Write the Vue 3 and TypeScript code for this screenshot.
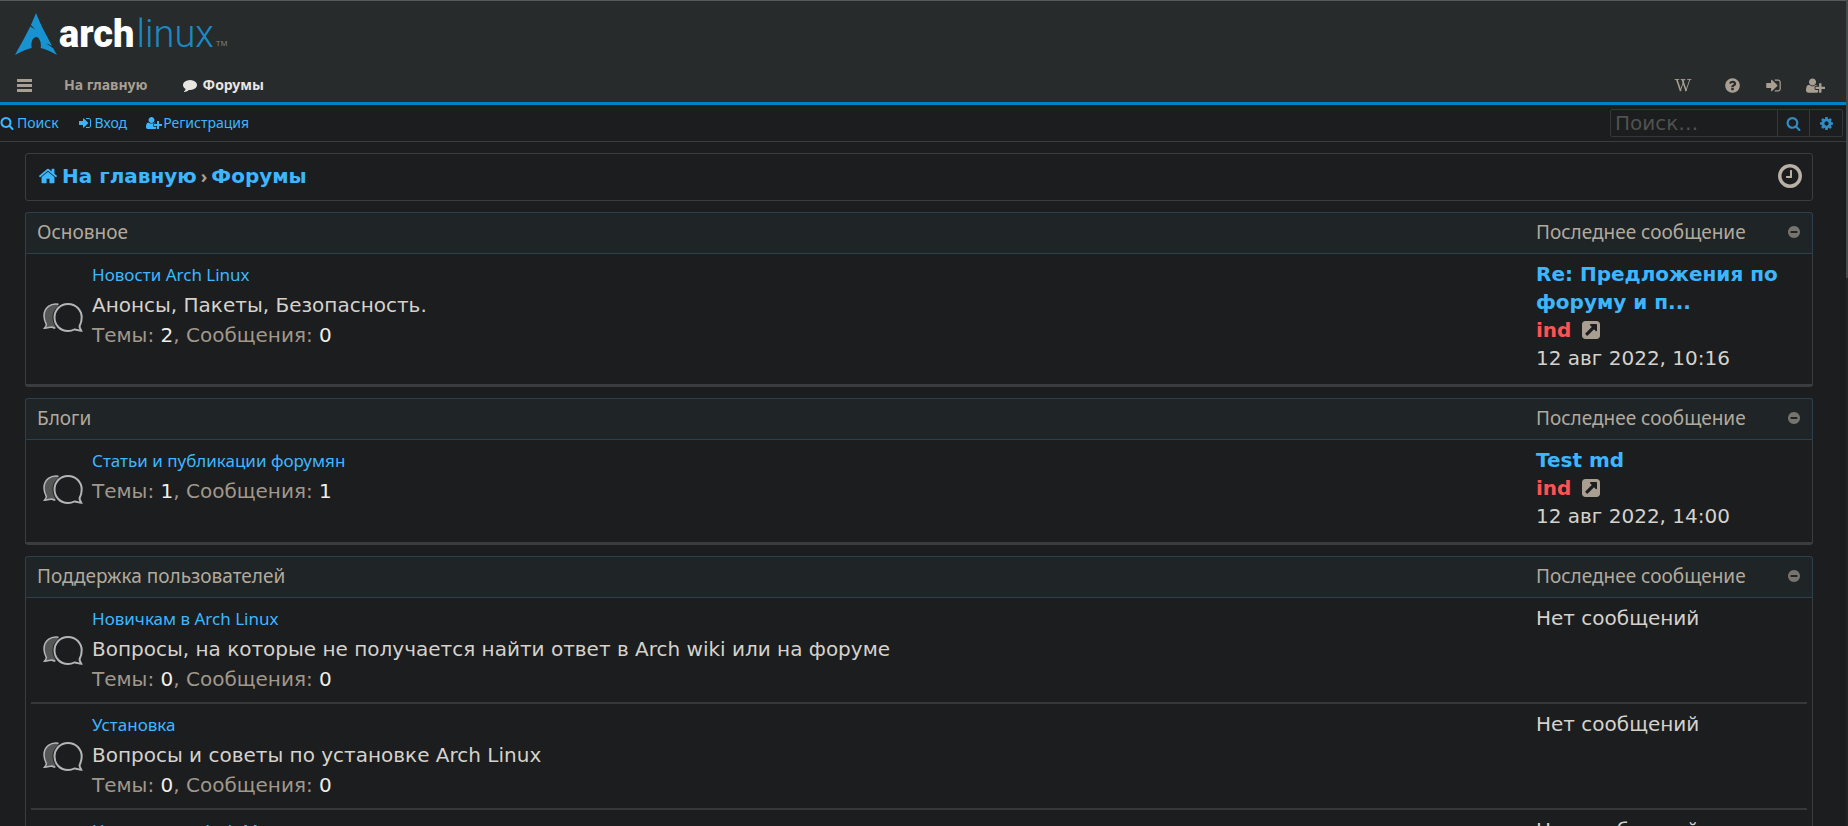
<script setup lang="ts">
interface LastPost {
  title: string
  user: string
  date: string
}
interface Forum {
  name: string
  description?: string
  topics: number
  posts: number
  last?: LastPost
}
interface Category {
  name: string
  forums: Forum[]
}

const circle =
  'M1664 896q0 209-103 385.5t-279.5 279.5-385.5 103-385.5-103-279.5-279.5-103-385.5 103-385.5 279.5-279.5 385.5-103 385.5 103 279.5 279.5 103 385.5z'

const icons = {
  search:
    'M1216 832q0-185-131.5-316.5t-316.5-131.5-316.5 131.5-131.5 316.5 131.5 316.5 316.5 131.5 316.5-131.5 131.5-316.5zm512 832q0 52-38 90t-90 38q-54 0-90-38l-343-342q-179 124-399 124-143 0-273.5-55.5t-225-150-150-225-55.5-273.5 55.5-273.5 150-225 225-150 273.5-55.5 273.5 55.5 225 150 150 225 55.5 273.5q0 220-124 399l343 343q37 37 37 90z',
  signIn:
    'M1312 896q0 26-19 45l-544 544q-19 19-45 19t-45-19-19-45v-288h-448q-26 0-45-19t-19-45v-384q0-26 19-45t45-19h448v-288q0-26 19-45t45-19 45 19l544 544q19 19 19 45zm352-352v704q0 119-84.5 203.5t-203.5 84.5h-320q-13 0-22.5-9.5t-9.5-22.5q0-4-1-20t-.5-26.5 3-23.5 10-19.5 20.5-6.5h320q66 0 113-47t47-113v-704q0-66-47-113t-113-47h-312l-11.5-1-11.5-3-8-5.5-7-9-2-13.5q0-4-1-20t-.5-26.5 3-23.5 10-19.5 20.5-6.5h320q119 0 203.5 84.5t84.5 203.5z',
  comment:
    'M1792 896q0 174-120 321.5t-326 233-450 85.5q-70 0-145-8-198 175-460 242-49 14-114 22-17 2-30.5-9t-17.5-29v-1q-3-4-.5-12t2-10 4.5-9.5l6-9 7-8.5 8-9q7-8 31-34.5t34.5-38 31-39.5 32.5-51 27-59 26-76q-157-89-247.5-220t-90.5-281q0-130 71-248.5t191-204.5 286-136.5 348-50.5q244 0 450 85.5t326 233 120 321.5z',
  home: 'M1472 992v480q0 26-19 45t-45 19h-384v-384h-256v384h-384q-26 0-45-19t-19-45v-480q0-1 .5-3t.5-3l575-474 575 474q1 2 1 6zm223-69l-62 74q-8 9-21 11h-3q-13 0-21-7l-692-577-692 577q-12 8-24 7-13-2-21-11l-62-74q-8-10-7-23.5t11-21.5l719-599q32-26 76-26t76 26l244 204v-195q0-14 9-23t23-9h192q14 0 23 9t9 23v408l219 182q10 8 11 21.5t-7 23.5z',
  question:
    'M1024 1376v-192q0-14-9-23t-23-9h-192q-14 0-23 9t-9 23v192q0 14 9 23t23 9h192q14 0 23-9t9-23zm256-672q0-88-55.5-163t-138.5-116-170-41q-243 0-371 213-15 24 8 42l132 100q7 6 19 6 16 0 25-12 53-68 86-92 34-24 86-24 48 0 85.5 26t37.5 59q0 38-20 61t-68 45q-63 28-115.5 86.5t-52.5 125.5v36q0 14 9 23t23 9h192q14 0 23-9t9-23q0-19 21.5-49.5t54.5-49.5q32-18 49-28.5t46-35 44.5-48 28-60.5 12.5-81z' +
    circle,
  minus:
    'M1344 960v-128q0-26-19-45t-45-19h-768q-26 0-45 19t-19 45v128q0 26 19 45t45 19h768q26 0 45-19t19-45z' +
    circle,
  clock:
    'M1024 544v448q0 14-9 23t-23 9h-320q-14 0-23-9t-9-23v-64q0-14 9-23t23-9h224v-352q0-14 9-23t23-9h64q14 0 23 9t9 23zm416 352q0-148-73-273t-198-198-273-73-273 73-198 198-73 273 73 273 198 198 273 73 273-73 198-198 73-273z' +
    circle,
  cog: 'M1152 896q0-106-75-181t-181-75-181 75-75 181 75 181 181 75 181-75 75-181zm512-109v222q0 12-8 23t-20 13l-185 28q-19 54-39 91 35 50 107 138 10 12 10 25t-9 23q-27 37-99 108t-94 71q-12 0-26-9l-138-108q-44 23-91 38-16 136-29 186-7 28-36 28h-222q-14 0-24.5-8.5t-11.5-21.5l-28-184q-49-16-90-37l-141 107q-10 9-25 9-14 0-25-11-126-114-165-168-7-10-7-23 0-12 8-23 15-21 51-66.5t54-70.5q-27-50-41-99l-183-27q-13-2-21-12.5t-8-23.5v-222q0-12 8-23t19-13l186-28q14-46 39-92-40-57-107-138-10-12-10-24 0-10 9-23 26-36 98.5-107.5t94.5-71.5q13 0 26 10l138 107q44-23 91-38 16-136 29-186 7-28 36-28h222q14 0 24.5 8.5t11.5 21.5l28 184q49 16 90 37l142-107q9-9 24-9 13 0 25 10 129 119 165 170 7 8 7 22 0 12-8 23-15 21-51 66.5t-54 70.5q26 50 41 98l183 28q13 2 21 12.5t8 23.5z',
  userPlus:
    'M704 896q-159 0-271.5-112.5t-112.5-271.5 112.5-271.5 271.5-112.5 271.5 112.5 112.5 271.5-112.5 271.5-271.5 112.5zm960 128h352q13 0 22.5 9.5t9.5 22.5v192q0 13-9.5 22.5t-22.5 9.5h-352v352q0 13-9.5 22.5t-22.5 9.5h-192q-13 0-22.5-9.5t-9.5-22.5v-352h-352q-13 0-22.5-9.5t-9.5-22.5v-192q0-13 9.5-22.5t22.5-9.5h352v-352q0-13 9.5-22.5t22.5-9.5h192q13 0 22.5 9.5t9.5 22.5v352zm-736 224q0 52 38 90t90 38h256v238q-68 50-171 50h-874q-121 0-194-69t-73-190q0-53 3.5-103.5t14-109 26.5-108.5 43-97.5 62-81 85.5-53.5 111.5-20q19 0 39 17 79 61 154.5 91.5t164.5 30.5 164.5-30.5 154.5-91.5q20-17 39-17 132 0 217 96h-223q-52 0-90 38t-38 90v192z',
  external:
    'M1408 928v-480q0-26-19-45t-45-19h-480q-42 0-59 39-17 41 14 70l144 144-534 534q-19 19-19 45t19 45l102 102q19 19 45 19t45-19l534-534 144 144q18 19 45 19 12 0 25-5 39-17 39-59zm256-512v960q0 119-84.5 203.5t-203.5 84.5h-960q-119 0-203.5-84.5t-84.5-203.5v-960q0-119 84.5-203.5t203.5-84.5h960q119 0 203.5 84.5t84.5 203.5z',
}

const categories: Category[] = [
  {
    name: 'Основное',
    forums: [
      {
        name: 'Новости Arch Linux',
        description: 'Анонсы, Пакеты, Безопасность.',
        topics: 2,
        posts: 0,
        last: { title: 'Re: Предложения по форуму и п...', user: 'ind', date: '12 авг 2022, 10:16' },
      },
    ],
  },
  {
    name: 'Блоги',
    forums: [
      {
        name: 'Статьи и публикации форумян',
        topics: 1,
        posts: 1,
        last: { title: 'Test md', user: 'ind', date: '12 авг 2022, 14:00' },
      },
    ],
  },
  {
    name: 'Поддержка пользователей',
    forums: [
      {
        name: 'Новичкам в Arch Linux',
        description: 'Вопросы, на которые не получается найти ответ в Arch wiki или на форуме',
        topics: 0,
        posts: 0,
      },
      {
        name: 'Установка',
        description: 'Вопросы и советы по установке Arch Linux',
        topics: 0,
        posts: 0,
      },
      { name: 'Неполадки в Arch Mono', topics: 0, posts: 0 },
    ],
  },
]
</script>

<template>
  <div class="page">
    <header class="header">
      <a class="logo" href="#" aria-label="Arch Linux">
        <svg class="mark" viewBox="0 0 42 42" aria-hidden="true">
          <path
            fill="#1793d1"
            d="M21 0c-1.900 4.600-3 7.600-5.100 12 1.300 1.300 2.800 2.900 5.300 4.700-2.700-1.100-4.500-2.200-5.900-3.400C12.700 18.800 8.500 26.800 0 42c6.700-3.900 11.900-6.200 16.700-7.100-.2-.9-.3-1.900-.3-2.900 0-4.600 2.200-8.300 4.800-8.100 2.700.2 4.800 4 4.700 8.500 0 .9-.1 1.700-.3 2.500 4.800.9 9.900 3.300 16.400 7.100-1.300-2.400-2.500-4.500-3.600-6.600-1.700-1.300-3.600-3.100-7.300-5 2.600.7 4.400 1.400 5.900 2.300C25.600 11.600 24.800 9.100 21 0z"
          />
        </svg>
        <span class="word"><b>arch</b><i>linux</i></span>
        <small>TM</small>
      </a>
      <nav class="main-nav" aria-label="Главное меню">
        <button class="menu" type="button" aria-label="Меню">
          <svg viewBox="0 0 15 13"><path d="M0 0h15v3H0zM0 5h15v3H0zM0 10h15v3H0z" /></svg>
        </button>
        <a class="to-home" href="#">На главную</a>
        <a class="current" href="#">
          <svg class="fa" viewBox="0 0 1792 1792"><path :d="icons.comment" /></svg>Форумы
        </a>
        <div class="tools">
          <a href="#" aria-label="Wiki">
            <svg class="wiki" viewBox="0 0 18 14" fill="none" stroke="currentColor">
              <path
                stroke-width="1"
                d="M0 .5h5M6.500 .5h5M13.500 .5h4.500M10.200 1 6 13.200M16.200 1l-4.200 12.200"
              />
              <path stroke-width="1.700" d="M2.300.5 6.500 13M8.200.5 12.500 13" />
            </svg>
          </a>
          <a href="#" aria-label="FAQ">
            <svg class="fa" viewBox="0 0 1792 1792"><path :d="icons.question" fill-rule="evenodd" /></svg>
          </a>
          <a href="#" aria-label="Вход">
            <svg class="fa" viewBox="0 0 1792 1792"><path :d="icons.signIn" /></svg>
          </a>
          <a href="#" aria-label="Регистрация">
            <svg class="fa wide" viewBox="0 0 2048 1792"><path :d="icons.userPlus" /></svg>
          </a>
        </div>
      </nav>
    </header>

    <div class="sub-bar">
      <nav class="sub-nav" aria-label="Пользователь">
        <a href="#"><svg class="fa" viewBox="0 0 1792 1792"><path :d="icons.search" /></svg>Поиск</a>
        <a href="#"><svg class="fa" viewBox="0 0 1792 1792"><path :d="icons.signIn" /></svg>Вход</a>
        <a href="#" class="tight">
          <svg class="fa wide" viewBox="0 0 2048 1792"><path :d="icons.userPlus" /></svg>Регистрация
        </a>
      </nav>
      <form class="search" role="search" @submit.prevent>
        <input type="search" placeholder="Поиск…" aria-label="Поиск" />
        <button type="submit" aria-label="Найти">
          <svg class="fa" viewBox="0 0 1792 1792"><path :d="icons.search" /></svg>
        </button>
        <a href="#" aria-label="Расширенный поиск">
          <svg class="fa" viewBox="0 0 1792 1792"><path :d="icons.cog" fill-rule="evenodd" /></svg>
        </a>
      </form>
    </div>

    <main class="content">
      <nav class="crumbs" aria-label="Навигация">
        <a href="#"><svg class="fa" viewBox="0 0 1792 1792"><path :d="icons.home" /></svg>На главную</a>
        <span class="sep">›</span>
        <a href="#">Форумы</a>
        <button class="time" type="button" aria-label="Часовой пояс">
          <svg viewBox="0 0 1792 1792"><path :d="icons.clock" fill-rule="evenodd" /></svg>
        </button>
      </nav>

      <section v-for="category in categories" :key="category.name" class="category">
        <header class="category-head">
          <h2><a href="#">{{ category.name }}</a></h2>
          <span>Последнее сообщение</span>
          <button type="button" aria-label="Свернуть">
            <svg viewBox="0 0 1792 1792"><path :d="icons.minus" fill-rule="evenodd" /></svg>
          </button>
        </header>
        <ul>
          <li v-for="forum in category.forums" :key="forum.name">
            <svg class="bubbles" viewBox="0 0 40 30" fill="none" stroke="#b4b5b5" stroke-width="2">
              <path
                fill="#555757"
                stroke-width="1.500"
                d="M15.500 1.300C8-.2 1 4.500 1 13c0 3.500 1.400 6.500 2.300 8.300.3 1.500-.8 2.500-1.800 3.900 2.700-.1 4.800-.9 7.200-1.200 1.200.6 2.300.9 3.600 1.200"
              />
              <ellipse cx="25" cy="14.500" rx="15.500" ry="15" fill="#1c1d1f" stroke="none" />
              <path
                fill="#1c1d1f"
                d="M25 1C17 1 11.500 7.200 11.500 14.500S17 28 25 28c2.500 0 4.500-.5 6.300-1.500 2.300-.3 4.300 1.300 7 1.300-.8-1.800-2-3-1.700-4.900 1.300-2.400 2.100-5.100 2.100-8.400C38.700 7.200 33 1 25 1z"
              />
            </svg>
            <div class="info">
              <a class="name" href="#">{{ forum.name }}</a>
              <p v-if="forum.description">{{ forum.description }}</p>
              <p class="stats">
                Темы: <b>{{ forum.topics }}</b>, Сообщения: <b>{{ forum.posts }}</b>
              </p>
            </div>
            <div class="last">
              <template v-if="forum.last">
                <a class="last-title" href="#">{{ forum.last.title }}</a>
                <div class="by">
                  <a class="user" href="#">{{ forum.last.user }}</a>
                  <a class="goto" href="#" aria-label="Перейти к последнему сообщению">
                    <svg viewBox="128 128 1536 1536"><path :d="icons.external" fill-rule="evenodd" /></svg>
                  </a>
                </div>
                <time>{{ forum.last.date }}</time>
              </template>
              <template v-else>Нет сообщений</template>
            </div>
          </li>
        </ul>
      </section>
    </main>
    <div class="scroll-track" aria-hidden="true"><div class="scroll-thumb"></div></div>
  </div>
</template>

<style>
html,
body {
  background: #1c1d1f;
  overflow: hidden;
}
</style>

<style scoped>
.page {
  position: relative;
  height: 100vh;
  overflow: hidden;
  box-sizing: border-box;
  padding-right: 2px;
  background: #1c1d1f;
  color: #d5d2cc;
  font: 20px/28px Verdana, 'DejaVu Sans', sans-serif;
}
a {
  color: #3cb7ff;
  text-decoration: none;
}
button {
  display: flex;
  align-items: center;
  justify-content: center;
  margin: 0;
  padding: 0;
  border: 0;
  background: none;
  color: inherit;
}
svg {
  display: block;
  flex: none;
}
.fa {
  width: 14px;
  height: 14px;
  fill: currentColor;
}
.fa.wide {
  width: 16px;
}
.header {
  background: #272b2c;
  border-top: 1px solid #565a5b;
  border-bottom: 3px solid #0082c8;
  font: bold 14px/20px 'Noto Sans', sans-serif;
}
.logo {
  display: flex;
  height: 66px;
  padding: 0 15px;
  align-items: center;
}
.mark {
  width: 42px;
  height: 42px;
}
.word {
  margin-left: 2px;
  font: 38px/42px Roboto, sans-serif;
  color: #1b8ac4;
}
.word b {
  margin-right: 2px;
  color: #fff;
  font-weight: 900;
}
.word i {
  font-style: normal;
  font-weight: 300;
}
.logo small {
  align-self: flex-end;
  margin: 0 0 18px 2px;
  font: 8px/10px 'Liberation Sans', sans-serif;
  color: #7d8080;
}
.main-nav {
  display: flex;
  align-items: center;
  box-sizing: border-box;
  height: 35px;
  padding: 1px 21px 0 17px;
}
.main-nav a,
.menu {
  color: #a89f92;
}
.menu svg {
  width: 15px;
  height: 13px;
  fill: currentColor;
}
.to-home {
  margin-left: 32px;
}
.main-nav .current {
  display: flex;
  align-items: center;
  gap: 6px;
  margin-left: 35px;
  color: #e8e6e3;
}
.tools {
  display: flex;
  align-items: center;
  gap: 24px;
  margin-left: auto;
}
.tools .fa {
  width: 17px;
  height: 17px;
}
.tools .wide {
  width: 19px;
}
.wiki {
  width: 18px;
  height: 13px;
  margin-right: 8px;
}
.sub-bar {
  display: flex;
  align-items: center;
  justify-content: space-between;
  height: 36px;
  padding-right: 3px;
  border-bottom: 1px solid #3a3c3e;
}
.sub-nav {
  display: flex;
  gap: 19px;
  font: 14px/20px 'Noto Sans', sans-serif;
}
.sub-nav a {
  display: flex;
  align-items: center;
  gap: 3px;
}
.sub-nav .tight {
  gap: 1px;
}
.search {
  display: flex;
  box-sizing: border-box;
  width: 233px;
  height: 28px;
  border: 1px solid #34383a;
  border-radius: 2px;
  color: #2f8cc4;
}
.search input {
  flex: 1;
  min-width: 0;
  padding: 0 4px;
  border: 0;
  outline: 0;
  background: none;
  color: #d5d2cc;
  font: 20px/26px Verdana, 'DejaVu Sans', sans-serif;
}
.search input::placeholder {
  color: #50524e;
  opacity: 1;
}
.search button,
.search a {
  display: flex;
  align-items: center;
  justify-content: center;
  width: 32px;
  border-left: 1px solid #34383a;
  color: #2f8cc4;
}
.search button .fa,
.search a .fa {
  width: 15px;
  height: 15px;
}
.content {
  padding: 11px 33px 0 25px;
}
.crumbs {
  display: flex;
  align-items: center;
  box-sizing: border-box;
  height: 48px;
  padding: 0 8px 2px 12px;
  border: 1px solid #3a3c3e;
  border-radius: 3px;
  font-weight: bold;
}
.crumbs a {
  display: flex;
  align-items: center;
  gap: 4px;
}
.crumbs .fa {
  width: 20px;
  height: 20px;
}
.sep {
  margin: 0 4px;
  color: #a89f92;
  font: bold 18px/24px 'Noto Sans', sans-serif;
}
.time {
  margin-left: auto;
  color: #b9b1a5;
}
.time svg {
  width: 28px;
  height: 28px;
  fill: currentColor;
}
.category {
  margin-top: 11px;
  border: 1px solid #3a3c3e;
  border-top: 0;
  border-bottom-width: 3px;
  border-radius: 3px;
}
.category-head {
  display: flex;
  align-items: center;
  height: 38px;
  margin: 0 -1px;
  padding: 0 11px 2px;
  border: 1px solid #2b3f4d;
  border-radius: 3px 3px 0 0;
  background: #1f2426;
  color: #b2aa9e;
  font: 19px/28px 'Noto Sans', sans-serif;
}
.category-head h2 {
  flex: 1;
  margin: 0;
  font: inherit;
}
.category-head h2 a {
  color: inherit;
}
.category-head span {
  width: 251px;
}
.category-head button {
  color: #77746e;
}
.category-head svg {
  width: 14px;
  height: 14px;
  fill: currentColor;
}
ul {
  list-style: none;
  margin: 0;
  padding: 0 5px 4px;
}
li {
  display: flex;
  align-items: flex-start;
  padding: 6px 0 8px 12px;
}
li + li {
  border-top: 2px solid #36393b;
}
.bubbles {
  align-self: center;
  width: 40px;
  height: 30px;
  margin-top: 4px;
}
.info {
  flex: 1;
  min-width: 0;
  margin-left: 9px;
  line-height: 30px;
}
.name {
  display: block;
  font: 17px/30px 'Noto Sans', sans-serif;
}
p {
  margin: 0;
}
.stats {
  color: #a0988b;
}
.stats b {
  font-weight: normal;
  color: #f0eeea;
}
.last {
  width: 250px;
  margin-right: 21px;
}
.last-title {
  display: block;
  font-weight: bold;
}
.by {
  display: flex;
  align-items: center;
  gap: 11px;
}
.user {
  color: #ff5252;
  font-weight: bold;
}
.goto {
  color: #a89f92;
}
.goto svg {
  width: 18px;
  height: 18px;
  fill: currentColor;
}
.scroll-track {
  position: absolute;
  top: 0;
  right: 0;
  bottom: 0;
  width: 2px;
  background: #222526;
}
.scroll-thumb {
  height: 278px;
  background: #454a4d;
}
</style>
